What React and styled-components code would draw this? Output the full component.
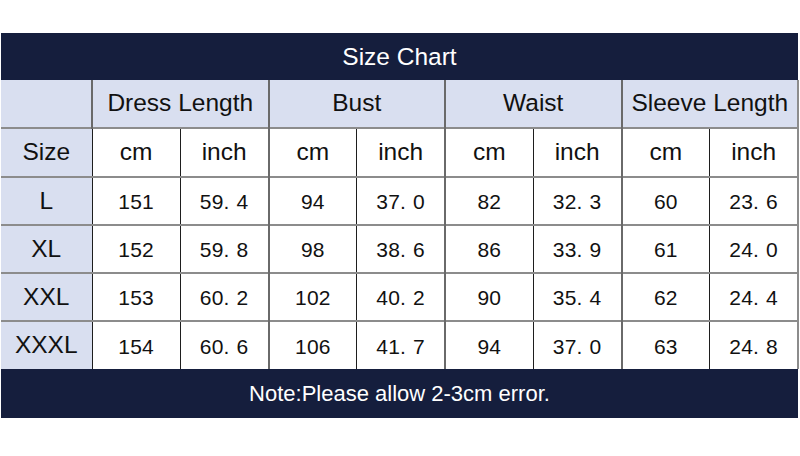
import React from 'react'
import styled, { createGlobalStyle } from 'styled-components'

const groups = ['Dress Length', 'Bust', 'Waist', 'Sleeve Length']

const rows = [
  { size: 'L', values: ['151', '59.4', '94', '37.0', '82', '32.3', '60', '23.6'] },
  { size: 'XL', values: ['152', '59.8', '98', '38.6', '86', '33.9', '61', '24.0'] },
  { size: 'XXL', values: ['153', '60.2', '102', '40.2', '90', '35.4', '62', '24.4'] },
  { size: 'XXXL', values: ['154', '60.6', '106', '41.7', '94', '37.0', '63', '24.8'] },
]

const GlobalStyle = createGlobalStyle`
  body {
    margin: 0;
    background: #ffffff;
    font-family: "Liberation Sans", Arial, sans-serif;
  }
`

const Page = styled.div`
  width: 800px;
  height: 456px;
  padding: 33px 1px 0 1px;
  box-sizing: border-box;
`

const Table = styled.table`
  width: 798px;
  border-collapse: collapse;
  table-layout: fixed;
  color: #111;
`

const Row = styled.tr`
  height: ${p => p.$h || 48}px;
`

const Bar = styled.td`
  background: #151e3d;
  color: #ffffff;
  text-align: center;
  font-size: ${p => p.$size}px;
  padding: 0;
  border: none;
`

const Cell = styled.td`
  padding: 0;
  text-align: center;
  font-size: 24.5px;
  line-height: 1;
  background: ${p => (p.$light ? '#d9dff0' : '#ffffff')};
  border-top: 2px solid #8c8c8c;
  border-left: ${p => (p.$group ? '2px solid #6a6a6a' : '1px solid #1e1e1e')};
  &:first-child {
    border-left: none;
  }
  &:last-child {
    border-right: 2px solid #8c8c8c;
  }
`

const GroupCell = styled(Cell)`
  border-top: none;
  border-left: 2px solid #6a6a6a;
`

const Num = styled.span`
  display: inline-block;
  font-size: 21px;
  letter-spacing: 0.2px;
  padding-top: 3px;
`

const Dot = styled.span`
  margin-right: 7px;
`

function Value({ text }) {
  const [a, b] = text.split('.')
  return (
    <Num>
      {a}
      {b !== undefined && (
        <>
          <Dot>.</Dot>
          {b}
        </>
      )}
    </Num>
  )
}

export default function App() {
  return (
    <Page>
      <GlobalStyle />
      <Table>
        <colgroup>
          <col style={{ width: 91 }} />
          {Array.from({ length: 8 }).map((_, i) => (
            <col key={i} />
          ))}
        </colgroup>
        <tbody>
          <Row $h={47}>
            <Bar colSpan={9} $size={24.5}>Size Chart</Bar>
          </Row>
          <Row>
            <GroupCell $light />
            {groups.map(g => (
              <GroupCell key={g} colSpan={2} $light>{g}</GroupCell>
            ))}
          </Row>
          <Row $h={49}>
            <Cell $light>Size</Cell>
            {groups.map((g, i) => (
              <React.Fragment key={g}>
                <Cell $group={i > 0}>cm</Cell>
                <Cell>inch</Cell>
              </React.Fragment>
            ))}
          </Row>
          {rows.map(r => (
            <Row key={r.size}>
              <Cell $light>{r.size}</Cell>
              {r.values.map((v, i) => (
                <Cell key={i} $group={i > 0 && i % 2 === 0}>
                  <Value text={v} />
                </Cell>
              ))}
            </Row>
          ))}
          <Row $h={49}>
            <Bar colSpan={9} $size={22}>Note:Please allow 2-3cm error.</Bar>
          </Row>
        </tbody>
      </Table>
    </Page>
  )
}
